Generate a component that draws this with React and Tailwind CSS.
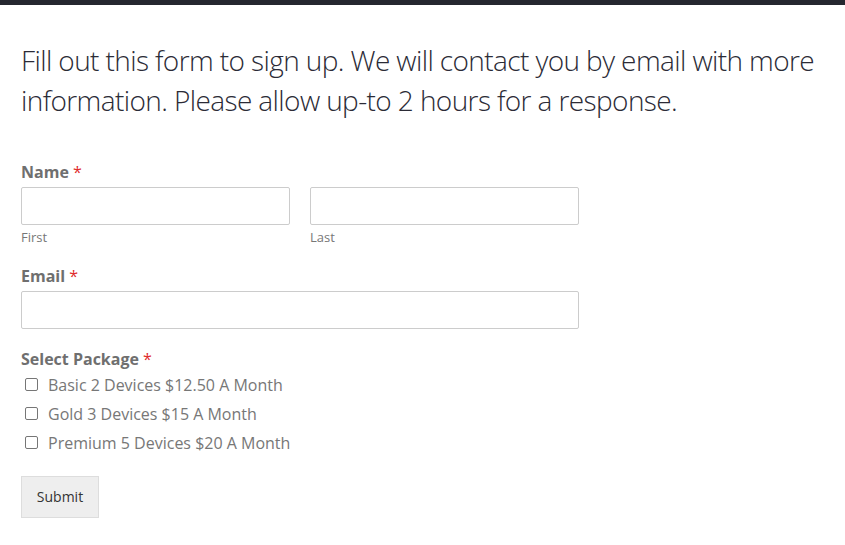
export default function App() {
  const packages = [
    "Basic 2 Devices $12.50 A Month",
    "Gold 3 Devices $15 A Month",
    "Premium 5 Devices $20 A Month",
  ];

  return (
    <div className="min-h-[545px] bg-white font-['Open_Sans',sans-serif]">
      {/* dark strip at the very top */}
      <div className="h-[5px] bg-[#25272f]" />

      <div className="px-[21px] pt-[35px]">
        <p className="w-[810px] text-[28px] leading-[40px] font-light tracking-[-0.6px] text-[#2b2b36]">
          Fill out this form to sign up. We will contact you by email with more information. Please allow up-to 2 hours for a response.
        </p>

        <form className="mt-[40px] w-[558px]">
          {/* Name */}
          <div className="text-[16px] leading-[24px] font-bold text-[#6f6f6f]">
            Name <span className="font-normal text-[#e02b2b]">*</span>
          </div>
          <div className="mt-[3px] grid grid-cols-2 gap-[20px]">
            <div>
              <input className="block h-[38px] w-full rounded-[2px] border border-[#cccccc] bg-white" />
              <div className="mt-[4px] text-[13px] leading-[17px] text-[#777]">First</div>
            </div>
            <div>
              <input className="block h-[38px] w-full rounded-[2px] border border-[#cccccc] bg-white" />
              <div className="mt-[4px] text-[13px] leading-[17px] text-[#777]">Last</div>
            </div>
          </div>

          {/* Email */}
          <div className="mt-[18px] text-[16px] leading-[24px] font-bold text-[#6f6f6f]">
            Email <span className="font-normal text-[#e02b2b]">*</span>
          </div>
          <input className="mt-[3px] block h-[38px] w-full rounded-[2px] border border-[#cccccc] bg-white" />

          {/* Package */}
          <div className="mt-[18px] text-[16px] leading-[24px] font-bold text-[#6f6f6f]">
            Select Package <span className="font-normal text-[#e02b2b]">*</span>
          </div>
          <div className="mt-[-1px] flex flex-col">
            {packages.map((p) => (
              <label key={p} className="flex h-[29px] items-center gap-[10px] pl-[4px] text-[16px] text-[#777]">
                <span className="h-[13px] w-[13px] rounded-[2px] border border-[#767676] bg-white" />
                <span>{p}</span>
              </label>
            ))}
          </div>

          <button
            type="button"
            className="mt-[19px] block h-[42px] w-[78px] border border-[#dddddd] bg-[#eeeeee] pb-[2px] text-[14px] text-[#333]"
          >
            Submit
          </button>
        </form>
      </div>
    </div>
  );
}
